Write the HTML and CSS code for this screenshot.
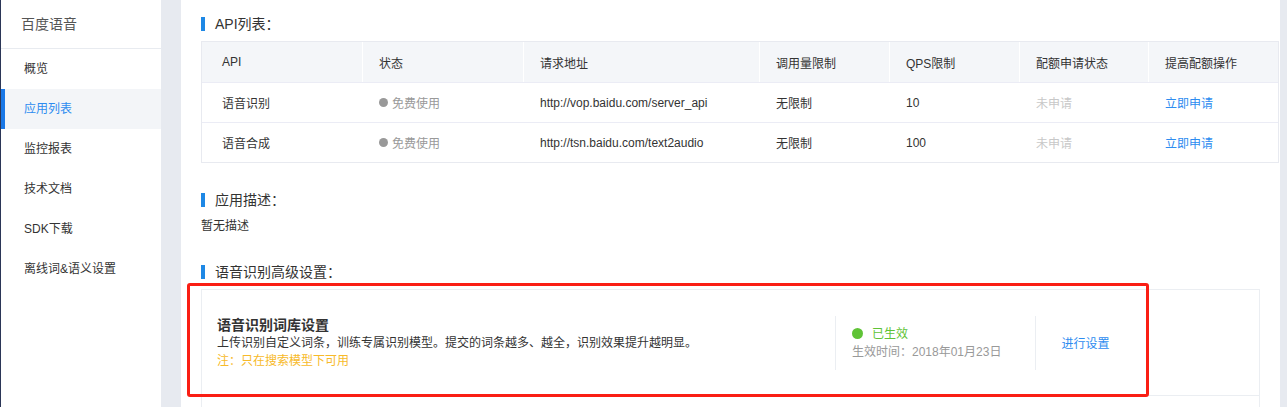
FILE: index.html
```html
<!DOCTYPE html>
<html lang="zh-CN">
<head>
<meta charset="utf-8">
<title>百度语音 - 应用列表</title>
<link rel="stylesheet" href="styles.css">
</head>
<body>
<aside class="sidebar">
  <div class="sidebar-title">百度语音</div>
  <ul class="nav">
    <li class="nav-item">概览</li>
    <li class="nav-item active">应用列表</li>
    <li class="nav-item">监控报表</li>
    <li class="nav-item">技术文档</li>
    <li class="nav-item">SDK下载</li>
    <li class="nav-item">离线词&amp;语义设置</li>
  </ul>
</aside>
<main class="main">
  <h3 class="section-title">API列表：</h3>
  <div class="api-table">
    <div class="row head">
      <div class="cell">API</div>
      <div class="cell">状态</div>
      <div class="cell">请求地址</div>
      <div class="cell">调用量限制</div>
      <div class="cell">QPS限制</div>
      <div class="cell">配额申请状态</div>
      <div class="cell">提高配额操作</div>
    </div>
    <div class="row">
      <div class="cell">语音识别</div>
      <div class="cell muted"><span class="dot gray"></span>免费使用</div>
      <div class="cell latin">http://vop.baidu.com/server_api</div>
      <div class="cell">无限制</div>
      <div class="cell latin">10</div>
      <div class="cell light">未申请</div>
      <div class="cell link">立即申请</div>
    </div>
    <div class="row">
      <div class="cell">语音合成</div>
      <div class="cell muted"><span class="dot gray"></span>免费使用</div>
      <div class="cell latin">http://tsn.baidu.com/text2audio</div>
      <div class="cell">无限制</div>
      <div class="cell latin">100</div>
      <div class="cell light">未申请</div>
      <div class="cell link">立即申请</div>
    </div>
  </div>

  <h3 class="section-title desc-title">应用描述：</h3>
  <p class="desc-text">暂无描述</p>

  <h3 class="section-title adv-title">语音识别高级设置：</h3>
  <div class="setting-list">
    <div class="setting-card">
      <div class="setting-info">
        <div class="setting-name">语音识别词库设置</div>
        <div class="setting-desc">上传识别自定义词条，训练专属识别模型。提交的词条越多、越全，识别效果提升越明显。</div>
        <div class="setting-note">注：只在搜索模型下可用</div>
      </div>
      <div class="setting-status">
        <div class="status-line"><span class="dot green"></span>已生效</div>
        <div class="status-time">生效时间：2018年01月23日</div>
      </div>
      <div class="setting-action">进行设置</div>
    </div>
    <div class="setting-card next"></div>
  </div>
</main>
<div class="annotation"></div>
</body>
</html>
```

FILE: styles.css
```css
* {
  box-sizing: border-box;
}

html, body {
  margin: 0;
  padding: 0;
}

body {
  display: flex;
  width: 1287px;
  height: 407px;
  overflow: hidden;
  background: #e7eaf0;
  font-family: "Liberation Sans", "Noto Sans CJK SC", sans-serif;
  font-size: 12px;
  color: #333;
  position: relative;
  text-spacing-trim: space-all;
}

.sidebar {
  width: 161px;
  flex: none;
  height: 407px;
  background: #fff;
  border-left: 1px solid #2b3657;
}

.sidebar-title {
  height: 49px;
  line-height: 48px;
  padding-left: 20px;
  font-size: 14px;
  color: #555;
  border-bottom: 1px solid #e8ebf0;
}

.nav {
  list-style: none;
  margin: 0;
  padding: 0;
}

.nav-item {
  height: 40px;
  line-height: 40px;
  font-size: 12px;
  color: #333;
  border-left: 4px solid transparent;
  padding-left: 19px;
}

.nav-item.active {
  background: #f3f5f8;
  border-left-color: #1a78e6;
  color: #2d8cf0;
}

.main {
  margin-left: 20px;
  width: 1099px;
  flex: none;
  height: 407px;
  overflow: hidden;
  background: #fff;
  padding: 14px 0 0 20px;
}

.section-title {
  display: flex;
  align-items: center;
  margin: 0;
  height: 20px;
  line-height: 20px;
  font-size: 14px;
  font-weight: normal;
  color: #333;
}

.section-title::before {
  content: "";
  width: 4px;
  height: 14px;
  background: #1e88e5;
  margin-right: 10px;
}

.api-table {
  margin-top: 7px;
  width: 1078px;
  border: 1px solid #e8eaf0;
}

.row {
  display: grid;
  grid-template-columns: 160px 161px 236px 130px 130px 129px 1fr;
  height: 40px;
  align-items: center;
  border-top: 1px solid #ebecf5;
}

.row.head {
  border-top: none;
  background: #f4f6f9;
}

.cell {
  height: 100%;
  display: flex;
  align-items: center;
  padding-left: 16px;
  border-left: 1px solid transparent;
  white-space: nowrap;
}

.head .cell {
  border-left-color: #fff;
}

.row .cell:first-child {
  padding-left: 20px;
  border-left: none;
}

.latin {
  font-family: "Liberation Sans", sans-serif;
}

.muted {
  color: #999;
}

.light {
  color: #c8c8c8;
}

.link {
  color: #2d8cf0;
}

.dot {
  display: inline-block;
  border-radius: 50%;
  flex: none;
}

.dot.gray {
  width: 9px;
  height: 9px;
  background: #999;
  margin-right: 4px;
}

.dot.green {
  width: 11px;
  height: 11px;
  background: #5fc336;
  margin-right: 9px;
}

.desc-title {
  margin-top: 27px;
}

.desc-text {
  margin: 7px 0 0;
  line-height: 18px;
  font-size: 12px;
  color: #333;
}

.adv-title {
  margin-top: 27px;
}

.setting-list {
  margin-top: 7px;
  width: 1059px;
}

.setting-card {
  display: flex;
  align-items: center;
  height: 107px;
  border: 1px solid #ebeef2;
}

.setting-card.next {
  border-top: none;
  height: 40px;
}

.setting-info {
  width: 633px;
  padding-left: 15px;
  line-height: 18px;
}

.setting-name {
  font-size: 14px;
  font-weight: bold;
  color: #333;
}

.setting-desc {
  color: #333;
}

.setting-note {
  color: #f7ba2a;
}

.setting-status {
  width: 200px;
  height: 54px;
  border-left: 1px solid #ebeef2;
  padding-left: 16px;
  display: flex;
  flex-direction: column;
  justify-content: center;
  line-height: 18px;
}

.status-line {
  display: flex;
  align-items: center;
  color: #5fc336;
}

.status-time {
  color: #999;
}

.setting-action {
  width: 100px;
  height: 54px;
  border-left: 1px solid #ebeef2;
  display: flex;
  align-items: center;
  justify-content: center;
  color: #2d8cf0;
}

.annotation {
  position: absolute;
  left: 187px;
  top: 283px;
  width: 962px;
  height: 114px;
  border: 3px solid #fa1e14;
  border-radius: 3px;
  pointer-events: none;
}
```
